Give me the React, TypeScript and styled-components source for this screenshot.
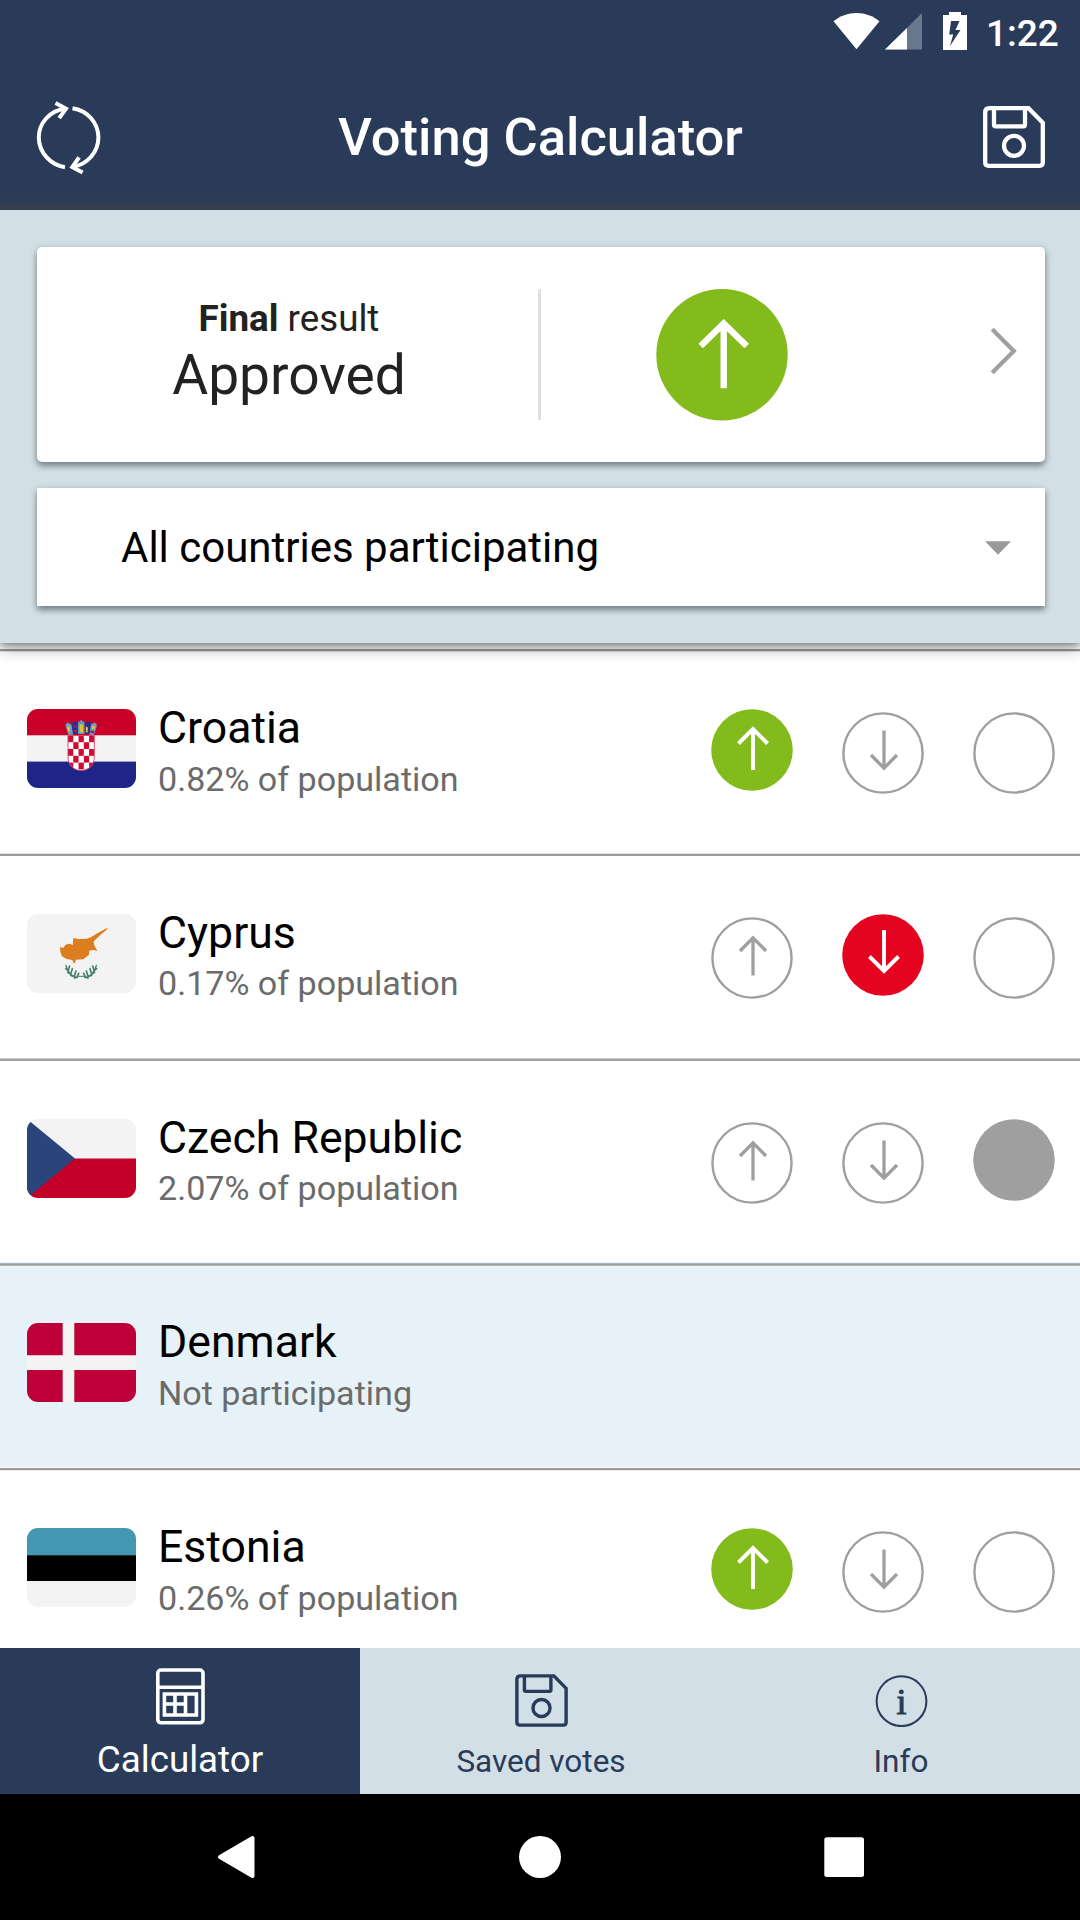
import React from "react";
import styled, { createGlobalStyle } from "styled-components";

const navy = "#293b59";
const mist = "#d2dfe7";
const green = "#84bb1c";
const red = "#e4041f";
const grey = "#9f9f9f";

const GlobalStyle = createGlobalStyle`
  *, *::before, *::after { box-sizing: border-box; }
  body { margin: 0; background: #fff; font-family: Roboto, "Noto Sans", sans-serif; }
  svg { display: block; flex: none; }
  button { font: inherit; color: inherit; border: 0; padding: 0; margin: 0; background: none; }
`;

const Screen = styled.div`
  display: flex;
  flex-direction: column;
  width: 1080px;
  height: 1920px;
  overflow: hidden;
  background: #fff;
`;

const Header = styled.header`
  height: 210px;
  flex: none;
  color: #fff;
  background: linear-gradient(rgba(54, 62, 74, 0), rgba(54, 62, 74, 0.3) 50%, #363e4a) bottom / 100% 18px no-repeat, ${navy};
`;

const StatusBar = styled.div`
  display: flex;
  justify-content: flex-end;
  height: 63px;
  padding: 12px 22px 0 0;
`;

const Clock = styled.span`
  width: 72px;
  margin-left: 19px;
  font-size: 37px;
  font-weight: 500;
  line-height: 43px;
  white-space: nowrap;
`;

const BatterySlot = styled.span`
  margin-left: 21px;
`;

const SignalSlot = styled.span`
  margin-left: 4px;
`;

const Toolbar = styled.div`
  display: grid;
  grid-template-columns: 72px 1fr 72px;
  align-items: start;
  height: 147px;
  padding: 37px 35px 0 32px;
`;

const ToolButton = styled.button<{ $end?: boolean; $drop?: number }>`
  display: flex;
  justify-content: ${(p) => (p.$end ? "flex-end" : "flex-start")};
  padding-top: ${(p) => p.$drop ?? 0}px;
`;

const Title = styled.h1`
  margin: 5px 0 0;
  padding-left: 4px;
  font-size: 52.5px;
  font-weight: 500;
  line-height: 64px;
  text-align: center;
  white-space: nowrap;
`;

const Summary = styled.section`
  display: flex;
  flex-direction: column;
  gap: 26px;
  flex: none;
  height: 433px;
  padding: 37px 35px 0 37px;
  background: ${mist};
  position: relative;
  z-index: 1;
  box-shadow: 0 6px 14px rgba(0, 0, 0, 0.32), 0 2px 6px rgba(0, 0, 0, 0.3);
  clip-path: inset(0 0 -40px 0);
`;

const Card = styled.div`
  display: flex;
  background: #fff;
  box-shadow: 0 4px 6px rgba(0, 0, 0, 0.38), 0 1px 8px rgba(0, 0, 0, 0.12);
`;

const ResultCard = styled(Card)`
  height: 215px;
  border-radius: 5px;
`;

const ResultText = styled.div`
  width: 501px;
  padding-top: 50px;
  text-align: center;
  color: #222;
`;

const ResultLabel = styled.div`
  font-size: 36.75px;
  line-height: 44px;
  padding-left: 3px;
`;

const ResultValue = styled.div`
  font-size: 55.1px;
  line-height: 68px;
  padding-left: 3px;
`;

const Divider = styled.div`
  width: 3px;
  height: 131px;
  margin-top: 42px;
  background: #dfdfdf;
`;

const ResultBadge = styled.div`
  margin: 42px 0 0 115px;
`;

const ChevronSlot = styled.div`
  margin: 80px 0 0 201px;
`;

const Picker = styled(Card)`
  align-items: center;
  justify-content: space-between;
  height: 118px;
  padding: 2px 34px 0 84px;
  font-size: 42px;
  line-height: 50px;
  color: #000;
`;

const List = styled.main`
  flex: 1;
  min-height: 0;
  padding-top: 5px;
  overflow: hidden;
`;

type Rule = [number, number, number, number];
const line = (a: number) => `rgba(155, 155, 155, ${a})`;

const Row = styled.div<{ $muted?: boolean; $rule: Rule }>`
  display: flex;
  align-items: flex-start;
  height: 204.75px;
  padding: 0 24.8px 0 27px;
  background: linear-gradient(
        ${(p) => line(p.$rule[0])} 1px,
        ${(p) => line(p.$rule[1])} 1px 2px,
        ${(p) => line(p.$rule[2])} 2px 3px,
        ${(p) => line(p.$rule[3])} 3px
      )
      top / 100% 4px no-repeat,
    ${(p) => (p.$muted ? "#e7f2f8" : "#fff")};
`;

const FlagBox = styled.div`
  width: 109px;
  height: 79px;
  margin-top: 61px;
  border-radius: 11px;
  overflow: hidden;
`;

const Country = styled.div`
  flex: 1;
  padding: 54px 0 0 22px;
`;

const CountryName = styled.div`
  font-size: 44.6px;
  line-height: 52px;
  color: #000;
`;

const CountryNote = styled.div`
  margin-top: 4.5px;
  font-size: 34.1px;
  line-height: 40px;
  color: #6b6b6b;
`;

const Votes = styled.div`
  display: flex;
  align-items: flex-start;
  gap: 49.1px;
  padding-top: 61px;
`;

const Vote = styled.button<{ $on: boolean }>`
  padding-top: ${(p) => (p.$on ? 0 : 3)}px;
`;

const Tabs = styled.nav`
  display: grid;
  grid-template-columns: repeat(3, 1fr);
  flex: none;
  height: 146px;
`;

const Tab = styled.button<{ $active?: boolean }>`
  display: flex;
  flex-direction: column;
  align-items: center;
  justify-content: space-between;
  padding: ${(p) => (p.$active ? "20px 0 11px" : "26px 0 11px 2px")};
  color: ${(p) => (p.$active ? "#fff" : navy)};
  background: ${(p) => (p.$active ? navy : mist)};
  font-size: ${(p) => (p.$active ? 36.75 : 31.5)}px;
  line-height: ${(p) => (p.$active ? 46 : 42)}px;
`;

const SystemNav = styled.div`
  display: grid;
  grid-template-columns: 257px 566px 257px;
  align-items: center;
  flex: none;
  height: 126px;
  background: #000;
`;

const SystemKey = styled.button<{ $side?: "left" | "right" }>`
  display: flex;
  justify-content: ${(p) =>
    p.$side === "left" ? "flex-end" : p.$side === "right" ? "flex-start" : "center"};
`;

const Wifi = () => (
  <svg width="48" height="38" viewBox="0 0 48 38">
    <path d="M.5 9.3C7 4 15 1 23.5 1S40 4 46.5 9.3L23.5 37.2z" fill="#fff" />
  </svg>
);

const Signal = () => (
  <svg width="37" height="38" viewBox="0 0 37 38">
    <path d="M37 1v36.5H0z" fill="#69788d" />
    <path d="M22 16v21.5H0z" fill="#fff" />
  </svg>
);

const Battery = () => (
  <svg width="24" height="38" viewBox="0 0 24 38">
    <path
      fill="#fff"
      fillRule="evenodd"
      d="M6 0h12v3h6v35H0V3h6zM8 9 6.2 22.5h4L7 34 17.5 18h-5L16.5 9z"
    />
  </svg>
);

const Refresh = () => (
  <svg width="72" height="76" viewBox="0 0 72 76" fill="none" stroke="#fff" strokeWidth="4">
    <path d="M33 67.2C18.500 65 6.800 52.500 6.800 37.600C6.800 23 17.500 11 33 8.600" />
    <path d="M40.500 8.200C55 10.300 66.400 22.500 66.400 37.600C66.400 52 55.500 64.500 40.500 67" />
    <path d="m23.500 3 10.500 5.600-6.800 9.600" />
    <path d="m50.600 72.600-10.300-5.600 6.800-9.600" />
  </svg>
);

const Disk = ({ size, weight }: { size: number; weight: number }) => (
  <svg
    width={size}
    height={size}
    viewBox="0 0 62 62"
    fill="none"
    stroke="currentColor"
    strokeWidth={weight}
  >
    <path d="M6.500 2.200H45.500L59.800 16.800V56.500Q59.800 59.800 56.500 59.800H5.500Q2.200 59.800 2.200 56.500V6.500Q2.200 2.200 6.500 2.200Z" />
    <path d="M11 2.500V18.500Q11 20.300 12.800 20.300H40.300Q42 20.300 42 18.500V2.500" />
    <circle cx="31" cy="39.800" r="10" />
  </svg>
);

const CalculatorIcon = () => (
  <svg width="49" height="57" viewBox="0 0 49 57" fill="none" stroke="#fff" strokeWidth="3.600">
    <rect x="1.800" y="2" width="45.200" height="52.800" rx="3.200" />
    <path d="M2 19.300H47" />
    <path d="M8.400 26H40.400V47H8.400ZM19 26V47M29.500 26V47M8.400 36H29.500" />
  </svg>
);

const InfoIcon = () => (
  <svg width="53" height="53" viewBox="0 0 53 53">
    <circle cx="26.500" cy="27.200" r="24.900" fill="none" stroke={navy} strokeWidth="2" />
    <text
      x="26.500"
      y="39.500"
      textAnchor="middle"
      fontFamily="Liberation Serif, serif"
      fontSize="36"
      fill={navy}
      stroke={navy}
      strokeWidth="1"
    >
      i
    </text>
  </svg>
);

type Direction = "up" | "down" | "none";

const VoteIcon = ({ direction, on }: { direction: Direction; on: boolean }) => {
  const fill = direction === "up" ? green : direction === "down" ? red : grey;
  return (
    <svg width="82" height="82" viewBox="0 0 82 82" fill="none">
      {on ? (
        <circle cx="41" cy="41" r="40.800" fill={fill} />
      ) : (
        <circle cx="41" cy="41" r="39.600" stroke={grey} strokeWidth="2.400" />
      )}
      {direction !== "none" && (
        <g
          stroke={on ? "#fff" : grey}
          strokeWidth={on ? 3.9 : 3.3}
          transform={direction === "down" ? "matrix(1 0 0 -1 0 77)" : undefined}
        >
          {on ? (
            <path d="M42 20V61M27.400 34.500 42 20 56.600 34.500" />
          ) : (
            <path d="M42 20.500V58.500M29 34 42 20.800 55 34" />
          )}
        </g>
      )}
    </svg>
  );
};

const ResultIcon = () => (
  <svg width="132" height="132" viewBox="0 0 132 132" fill="none">
    <circle cx="66" cy="65.700" r="65.700" fill={green} />
    <path
      d="M67.700 35V99.300M44.700 57 67.700 34.500 90.700 57"
      stroke="#fff"
      strokeWidth="6.400"
    />
  </svg>
);

const Croatia = () => (
  <svg width="109" height="79" viewBox="0 0 109 79">
    <rect width="109" height="79" fill="#f3f3f3" />
    <rect width="109" height="26.300" fill="#c90028" />
    <rect y="52.600" width="109" height="26.400" fill="#1e2586" />
    <clipPath id="shield">
      <path d="M41 26.500H67.300V48C67.300 66 41 66 41 48Z" />
    </clipPath>
    <g clipPath="url(#shield)">
      <rect x="41" y="26" width="27" height="36" fill="#fff" />
      {[0, 1, 2, 3, 4].flatMap((r) =>
        [0, 1, 2, 3, 4].map((c) =>
          (r + c) % 2 === 0 ? (
            <rect
              key={`${r}${c}`}
              x={41 + c * 5.27}
              y={26.4 + r * 6.8}
              width="5.270"
              height="6.800"
              fill="#cf0a30"
            />
          ) : null
        )
      )}
    </g>
    <path
      d="M41 26.500V48C41 66 67.300 66 67.300 48V26.500Z"
      fill="none"
      stroke="#d8405f"
      strokeWidth="0.900"
    />
    <path d="M38.300 16 40.500 13.500 44.500 15.500 46.500 25.500 41.500 26Q39.500 20 38.300 16Z" fill="#6b9fc4" />
    <path d="M70 16 67.800 13.500 63.700 15.500 61.700 25.500 66.800 26Q69 20 70 16Z" fill="#6b9fc4" />
    <path d="M44.500 14.500 47.700 12 51 14.500V25H46Z" fill="#23318f" />
    <path d="M57.500 14.500 60.800 12 64 14.500 62.500 25H57.500Z" fill="#23318f" />
    <path d="M51 13.500 54.200 11 57.500 13.500V25H51Z" fill="#5f9cc0" />
    <path d="M52.500 15.500H56V23.500H52.500ZM40.300 18 43 17.500V22.500H41ZM58.800 17.500 61 18.500 60.500 23.500H58.800ZM65 17H67.800V20H65Z" fill="#e3c03a" />
    <path d="M46 16.500H50.500V18.500H46ZM46.500 21H50.500V23H46.500ZM63.500 21.500 67.500 22 66.500 24.500 63 23.500Z" fill="#b01848" />
  </svg>
);

const Cyprus = () => (
  <svg width="109" height="79" viewBox="0 0 109 79">
    <rect width="109" height="79" fill="#f3f3f3" />
    <g transform="scale(0.33333) translate(-21 -42)">
      <path
        fill="#dc7d20"
        d="M120 141 130 144Q134 134 143 132L151 131 158 136 160 114 175 117 200 116Q214 113 222 106L240 95 261 84 262 88 242 104 221 124 222 134 232 153 220 150 208 152 207 164 190 178 168 179 165 189 161 190 157 180 140 177 126 169 121 155Z"
      />
      <g fill="none" stroke="#437f6c" strokeLinecap="round">
        <path d="M138 196C141 214 154 230 172 233M229 196C226 214 213 230 195 233" strokeWidth="4" />
        <path
          d="M137 206 145 212M149 198 145 210M143 217 152 222M157 206 153 219M152 226 163 229M168 213 164 226M163 234 172 231M176 220 172 229"
          strokeWidth="5"
        />
        <path
          d="M230 206 222 212M218 198 222 210M224 217 215 222M210 206 214 219M215 226 204 229M199 213 203 226M204 234 195 231M191 220 195 229"
          strokeWidth="5"
        />
        <path d="M176 229H192" strokeWidth="3" />
      </g>
    </g>
  </svg>
);

const Czech = () => (
  <svg width="109" height="79" viewBox="0 0 109 79">
    <rect width="109" height="79" fill="#f3f3f3" />
    <rect y="39.500" width="109" height="39.500" fill="#c30027" />
    <path d="M0 0 48 39.500 0 79Z" fill="#29457a" />
  </svg>
);

const Denmark = () => (
  <svg width="109" height="79" viewBox="0 0 109 79">
    <rect width="109" height="79" fill="#be0039" />
    <path d="M35.700 0H47.300V32.200H109V47H47.300V79H35.700V47H0V32.200H35.700Z" fill="#f3f3f3" />
  </svg>
);

const Estonia = () => (
  <svg width="109" height="79" viewBox="0 0 109 79">
    <rect width="109" height="79" fill="#f3f3f3" />
    <rect width="109" height="27.200" fill="#4397b2" />
    <rect y="27.200" width="109" height="25.800" fill="#000" />
  </svg>
);

type Entry = {
  name: string;
  note: string;
  flag: React.ReactNode;
  vote?: Direction;
  rule: Rule;
};

const entries: Entry[] = [
  { name: "Croatia", note: "0.82% of population", flag: <Croatia />, vote: "up", rule: [0, 1, 1, 0.3] },
  { name: "Cyprus", note: "0.17% of population", flag: <Cyprus />, vote: "down", rule: [0.3, 1, 1, 0] },
  { name: "Czech Republic", note: "2.07% of population", flag: <Czech />, vote: "none", rule: [0.5, 1, 0.9, 0] },
  { name: "Denmark", note: "Not participating", flag: <Denmark />, rule: [0, 0.7, 1, 0.65] },
  { name: "Estonia", note: "0.26% of population", flag: <Estonia />, vote: "up", rule: [0, 1, 1, 0.2] },
];

const directions: Direction[] = ["up", "down", "none"];

export default function App() {
  return (
    <Screen>
      <GlobalStyle />
      <Header>
        <StatusBar>
          <Wifi />
          <SignalSlot><Signal /></SignalSlot>
          <BatterySlot><Battery /></BatterySlot>
          <Clock>1:22</Clock>
        </StatusBar>
        <Toolbar>
          <ToolButton aria-label="Reset"><Refresh /></ToolButton>
          <Title>Voting Calculator</Title>
          <ToolButton aria-label="Save" $end $drop={6}><Disk size={62} weight={4.3} /></ToolButton>
        </Toolbar>
      </Header>

      <Summary>
        <ResultCard>
          <ResultText>
            <ResultLabel><b>Final</b> result</ResultLabel>
            <ResultValue>Approved</ResultValue>
          </ResultText>
          <Divider />
          <ResultBadge><ResultIcon /></ResultBadge>
          <ChevronSlot>
            <svg width="28" height="48" viewBox="0 0 28 48" fill="none">
              <path d="M3.200 2.300 24.800 24 3.200 45.700" stroke={grey} strokeWidth="4.200" />
            </svg>
          </ChevronSlot>
        </ResultCard>
        <Picker>
          All countries participating
          <svg width="26" height="14" viewBox="0 0 26 14">
            <path d="M0 .3H26L13 13.700Z" fill="#999" />
          </svg>
        </Picker>
      </Summary>

      <List>
        {entries.map((e) => (
          <Row key={e.name} $muted={!e.vote} $rule={e.rule}>
            <FlagBox>{e.flag}</FlagBox>
            <Country>
              <CountryName>{e.name}</CountryName>
              <CountryNote>{e.note}</CountryNote>
            </Country>
            {e.vote && (
              <Votes>
                {directions.map((d) => (
                  <Vote key={d} $on={d === e.vote} aria-label={d}>
                    <VoteIcon direction={d} on={d === e.vote} />
                  </Vote>
                ))}
              </Votes>
            )}
          </Row>
        ))}
      </List>

      <Tabs>
        <Tab $active><CalculatorIcon />Calculator</Tab>
        <Tab><Disk size={53} weight={4} />Saved votes</Tab>
        <Tab><InfoIcon />Info</Tab>
      </Tabs>

      <SystemNav>
        <SystemKey $side="left" aria-label="Back">
          <svg width="40" height="44" viewBox="0 0 40 44">
            <path d="M3 22 35.500 3V41Z" fill="#fff" stroke="#fff" strokeWidth="4" strokeLinejoin="round" />
          </svg>
        </SystemKey>
        <SystemKey aria-label="Home">
          <svg width="42" height="42" viewBox="0 0 42 42">
            <circle cx="21" cy="21" r="21" fill="#fff" />
          </svg>
        </SystemKey>
        <SystemKey $side="right" aria-label="Recents">
          <svg width="42" height="42" viewBox="0 0 42 42">
            <rect x="1.300" y="1.200" width="39.700" height="39.700" rx="2.500" fill="#fff" />
          </svg>
        </SystemKey>
      </SystemNav>
    </Screen>
  );
}
